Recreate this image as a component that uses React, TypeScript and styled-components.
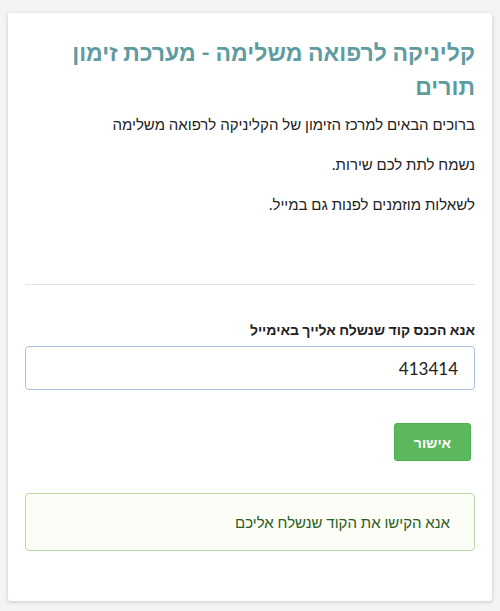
import React from 'react'
import styled, { createGlobalStyle } from 'styled-components'

const GlobalStyle = createGlobalStyle`
  html, body {
    margin: 0;
    padding: 0;
    background: #f4f4f4;
  }
  body {
    font-family: Lato, "Liberation Sans", "DejaVu Sans", sans-serif;
    color: #222;
  }
`

const Page = styled.div`
  padding: 13px 8px 11px 8px;
`

const Card = styled.div`
  direction: rtl;
  background: #fff;
  border-radius: 3px;
  box-shadow: 0 1px 4px rgba(0, 0, 0, 0.18);
  padding: 22px 17px 50px 17px;
`

const Title = styled.h2`
  margin: 0;
  color: #5f9ca0;
  font-size: 23px;
  font-weight: bold;
  line-height: 34px;
`

const Paragraph = styled.p<{ $first?: boolean }>`
  margin: 0;
  font-size: 15px;
  line-height: 20px;
  margin-top: ${(p) => (p.$first ? '11px' : '20px')};
`

const Divider = styled.hr`
  border: none;
  border-top: 1px solid #e2e2e2;
  margin: 70px 0 0 0;
`

const Label = styled.label`
  display: block;
  margin-top: 35px;
  font-size: 14px;
  font-weight: bold;
  line-height: 20px;
`

const CodeInput = styled.input`
  display: block;
  box-sizing: border-box;
  width: 100%;
  height: 44px;
  margin-top: 6px;
  padding: 0 16px;
  border: 1px solid #a9c3dc;
  border-radius: 4px;
  font-family: Lato, "Liberation Sans", sans-serif;
  font-size: 17px;
  color: #222;
  direction: rtl;
  outline: none;
`

const Actions = styled.div`
  display: flex;
  justify-content: flex-start;
  padding-right: 4px;
  margin-top: 33px;
`

const SubmitButton = styled.button`
  width: 77px;
  height: 38px;
  background: #5cb85c;
  border: 1px solid #4cae4c;
  border-radius: 3px;
  color: #fff;
  font-family: Lato, "Liberation Sans", sans-serif;
  font-size: 14px;
  font-weight: bold;
  cursor: pointer;
`

const Alert = styled.div`
  margin-top: 32px;
  background: #fcfdf6;
  border: 1px solid #b9d6a6;
  border-radius: 4px;
  padding: 18px 24px;
  color: #2b5e23;
  font-size: 15px;
  line-height: 20px;
`

export default function App() {
  return (
    <Page>
      <GlobalStyle />
      <Card>
        <Title>קליניקה לרפואה משלימה - מערכת זימון תורים</Title>
        <Paragraph $first>ברוכים הבאים למרכז הזימון של הקליניקה לרפואה משלימה</Paragraph>
        <Paragraph>נשמח לתת לכם שירות.</Paragraph>
        <Paragraph>לשאלות מוזמנים לפנות גם במייל.</Paragraph>
        <Divider />
        <Label htmlFor="code">אנא הכנס קוד שנשלח אלייך באימייל</Label>
        <CodeInput id="code" defaultValue="413414" />
        <Actions>
          <SubmitButton>אישור</SubmitButton>
        </Actions>
        <Alert>אנא הקישו את הקוד שנשלח אליכם</Alert>
      </Card>
    </Page>
  )
}
